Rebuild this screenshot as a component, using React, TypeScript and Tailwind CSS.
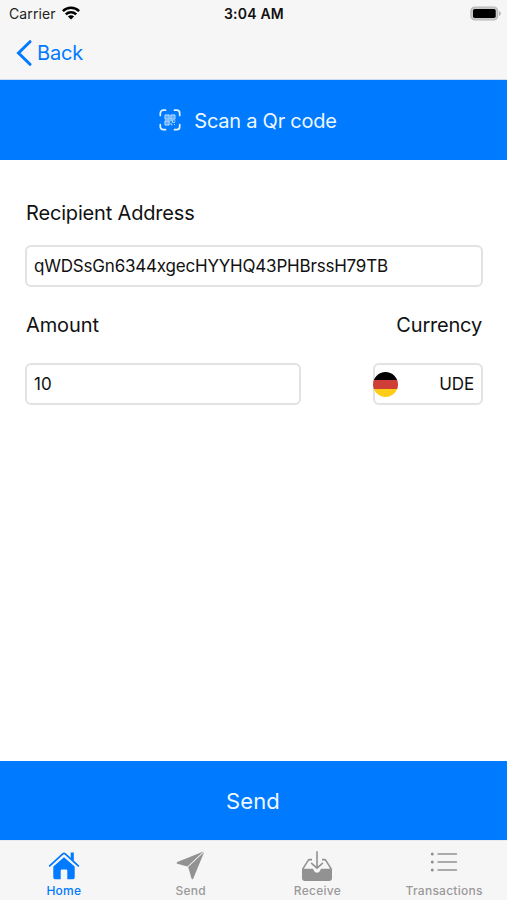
import React, { useState } from 'react';

interface TabItem {
  label: string;
  icon: React.ReactNode;
}

const WifiIcon: React.FC = () => (
  <svg width="18" height="14" viewBox="0 0 18 14" fill="none" stroke="#000" strokeWidth="2.5">
    <path d="M0.9 5.1a11.7 11.7 0 0 1 16.2 0" />
    <path d="M3.8 8.3a7.5 7.5 0 0 1 10.4 0" />
    <path d="M9 13.6L5.9 10.6a4.4 4.4 0 0 1 6.2 0z" fill="#000" stroke="none" />
  </svg>
);

const BatteryIcon: React.FC = () => (
  <svg width="32" height="16" viewBox="0 0 32 16">
    <rect x="0.9" y="1" width="26.8" height="13" rx="4" fill="#c9c9c9" stroke="#b8b8b8" strokeWidth="1.2" />
    <rect x="3" y="3" width="22.7" height="9" rx="1.8" fill="#000" />
    <path d="M29 5.1c2.4.7 2.4 4.1 0 4.8z" fill="#b3b3b3" />
  </svg>
);

const QrIcon: React.FC = () => (
  <svg width="22" height="22" viewBox="0 0 22 22" fill="none" stroke="#e3f4ff">
    <path
      d="M1.3 6.5V4.2a3 3 0 0 1 3-3h2.2M15.5 1.2h2.2a3 3 0 0 1 3 3v2.3M20.7 15.5v2.2a3 3 0 0 1-3 3h-2.2M6.5 20.7H4.3a3 3 0 0 1-3-3v-2.2"
      strokeWidth="1.7"
      strokeLinecap="round"
    />
    <rect x="5.7" y="5.5" width="10.4" height="6.8" fill="#e3f4ff" stroke="none" opacity="0.3" />
    <rect x="5.7" y="12" width="5" height="4.3" fill="#e3f4ff" stroke="none" opacity="0.3" />
    <path
      d="M6 6h4v4h-4zM12 6h4v4h-4zM6 12h4v4h-4zM7.5 8h1M13.5 8h1M7.5 14h1M12 11.7h1.5v1.7h2.5M12 13.5v2.3h1.5M15 15.5h1M16 11.5v1M10 11h2"
      strokeWidth="1"
      opacity="0.75"
    />
  </svg>
);

const HomeIcon: React.FC = () => (
  <svg width="32" height="30" viewBox="0 0 32 30" fill="none">
    <path d="M5.3 15.4L16 6.2l10.7 9.2v11a1.8 1.8 0 0 1-1.8 1.8h-5.6v-8.6a1 1 0 0 0-1-1h-4.6a1 1 0 0 0-1 1v8.6H7.1a1.8 1.8 0 0 1-1.8-1.8z" fill="#007aff" />
    <path d="M22.7 1.4h3.1v8.7l-3.1-2.7z" fill="#007aff" />
    <path d="M1.7 14.8L14.8 2.9a1.8 1.8 0 0 1 2.4 0l13.1 11.9" stroke="#007aff" strokeWidth="1.8" strokeLinecap="round" />
  </svg>
);

const SendIcon: React.FC = () => (
  <svg width="30" height="30" viewBox="0 0 30 30" fill="#929292">
    <path d="M27.4.4L1.3 11c-.9.4-.9 1.4 0 1.8l10.1 2.8z" />
    <path d="M28.2 1.1L12.2 16.1l3.3 11.4c.3.9 1.4 1 1.8.1z" />
  </svg>
);

const ReceiveIcon: React.FC = () => (
  <svg width="32" height="32" viewBox="0 0 32 32" fill="none" stroke="#929292">
    <path
      d="M1 18.8h10.1c1 0 1.3.5 1.5 1.3.9 3.4 5.9 3.4 6.8 0 .2-.8.5-1.3 1.5-1.3H31v9.8a2.4 2.4 0 0 1-2.4 2.4H3.4A2.4 2.4 0 0 1 1 28.6z"
      fill="#929292"
      stroke="none"
    />
    <path d="M1.7 19.2L7 10.6c.4-.7.9-1 1.7-1H11M21 9.6h2.3c.8 0 1.3.3 1.7 1l5.3 8.6" strokeWidth="1.6" />
    <path d="M16 1.7v16M10.6 13.3l5.4 4.8 5.4-4.8" strokeWidth="1.6" strokeLinecap="round" />
  </svg>
);

const ListIcon: React.FC = () => (
  <svg width="28" height="22" viewBox="0 0 28 22" fill="none" stroke="#929292" strokeLinecap="round">
    <path d="M8 3h18.5M8 11h18.5M8 19h18.5" strokeWidth="1.4" />
    <path d="M2.3 3h.01M2.3 11h.01M2.3 19h.01" strokeWidth="3" />
  </svg>
);

const tabs: TabItem[] = [
  { label: 'Home', icon: <HomeIcon /> },
  { label: 'Send', icon: <SendIcon /> },
  { label: 'Receive', icon: <ReceiveIcon /> },
  { label: 'Transactions', icon: <span className="pb-2"><ListIcon /></span> },
];

const App: React.FC = () => {
  const [address, setAddress] = useState('qWDSsGn6344xgecHYYHQ43PHBrssH79TB');
  const [amount, setAmount] = useState('10');
  const [activeTab, setActiveTab] = useState('Home');

  return (
    <div className="flex h-[900px] w-[507px] flex-col overflow-hidden bg-white font-['Inter',sans-serif] text-[#111]">
      <header className="h-20 shrink-0 border-b border-[#cbdcee] bg-[#f7f6f7]">
        <div className="grid h-[27px] grid-cols-3 items-center pl-[9px] pr-[5px]">
          <div className="flex items-center gap-1.5 text-[14px] tracking-[0.1px] text-[#222]">
            Carrier
            <span className="-mt-0.5"><WifiIcon /></span>
          </div>
          <div className="pr-[3px] text-center text-[14px] font-semibold tracking-[0.2px]">3:04 AM</div>
          <div className="flex justify-end"><BatteryIcon /></div>
        </div>
        <button className="flex h-[51px] items-center gap-[5px] pl-4 text-[20px] tracking-[-0.2px] text-[#007aff]">
          <svg width="16" height="26" viewBox="0 0 16 26" fill="none" stroke="#007aff" strokeWidth="3" strokeLinecap="round">
            <path d="M14 1.7L2.5 13 14 24.3" />
          </svg>
          Back
        </button>
      </header>

      <button className="flex h-20 shrink-0 items-center justify-center gap-[13px] bg-[#007aff] pr-[11px] text-[20px] tracking-[-0.25px] text-[#edf7ff]">
        <QrIcon />
        <span className="pt-px">Scan a Qr code</span>
      </button>

      <main className="flex flex-1 flex-col pl-[25px] pr-6 pt-[38px]">
        <label className="h-[30px] pl-px text-[20px] leading-[30px] tracking-[-0.17px]">Recipient Address</label>
        <input
          value={address}
          onChange={(e) => setAddress(e.target.value)}
          className="mt-[17px] h-[42px] rounded-md border-2 border-[#e2e2e2] px-[7px] text-[17px] tracking-[-0.2px] outline-none"
        />
        <div className="mt-[23px] flex h-[30px] justify-between px-px text-[20px] leading-[30px]">
          <span className="tracking-[-0.1px]">Amount</span>
          <span className="tracking-[-0.2px]">Currency</span>
        </div>
        <div className="mt-[23px] flex justify-between">
          <input
            value={amount}
            onChange={(e) => setAmount(e.target.value)}
            className="h-[42px] w-[276px] rounded-md border-2 border-[#e2e2e2] px-[7px] text-[17px] outline-none"
          />
          <button className="flex h-[42px] w-[110px] items-center justify-between rounded-md border-2 border-[#e2e2e2] pt-px pr-[7px] text-[17px] tracking-[-0.1px]">
            <span className="-ml-0.5 flex size-[25px] flex-col overflow-hidden rounded-full">
              <span className="flex-1 bg-black" />
              <span className="flex-1 bg-[#cf3f37]" />
              <span className="flex-1 bg-[#ffcc16]" />
            </span>
            UDE
          </button>
        </div>
      </main>

      <button className="h-[79px] shrink-0 bg-[#007aff] pt-px pr-px text-[22px] tracking-[0.1px] text-[#edf7ff]">Send</button>

      <nav className="grid h-[60px] shrink-0 grid-cols-4 border-t border-[#e7eaee] bg-[#f7f6f7]">
        {tabs.map((tab) => (
          <button
            key={tab.label}
            onClick={() => setActiveTab(tab.label)}
            className={`flex flex-col items-center pl-px text-[12px] font-medium tracking-[0.25px] ${
              activeTab === tab.label ? 'text-[#007aff]' : 'text-[#999]'
            }`}
          >
            <span className="flex h-[42px] items-center pt-[7px]">{tab.icon}</span>
            <span className="leading-4">{tab.label}</span>
          </button>
        ))}
      </nav>
    </div>
  );
};

export default App;
